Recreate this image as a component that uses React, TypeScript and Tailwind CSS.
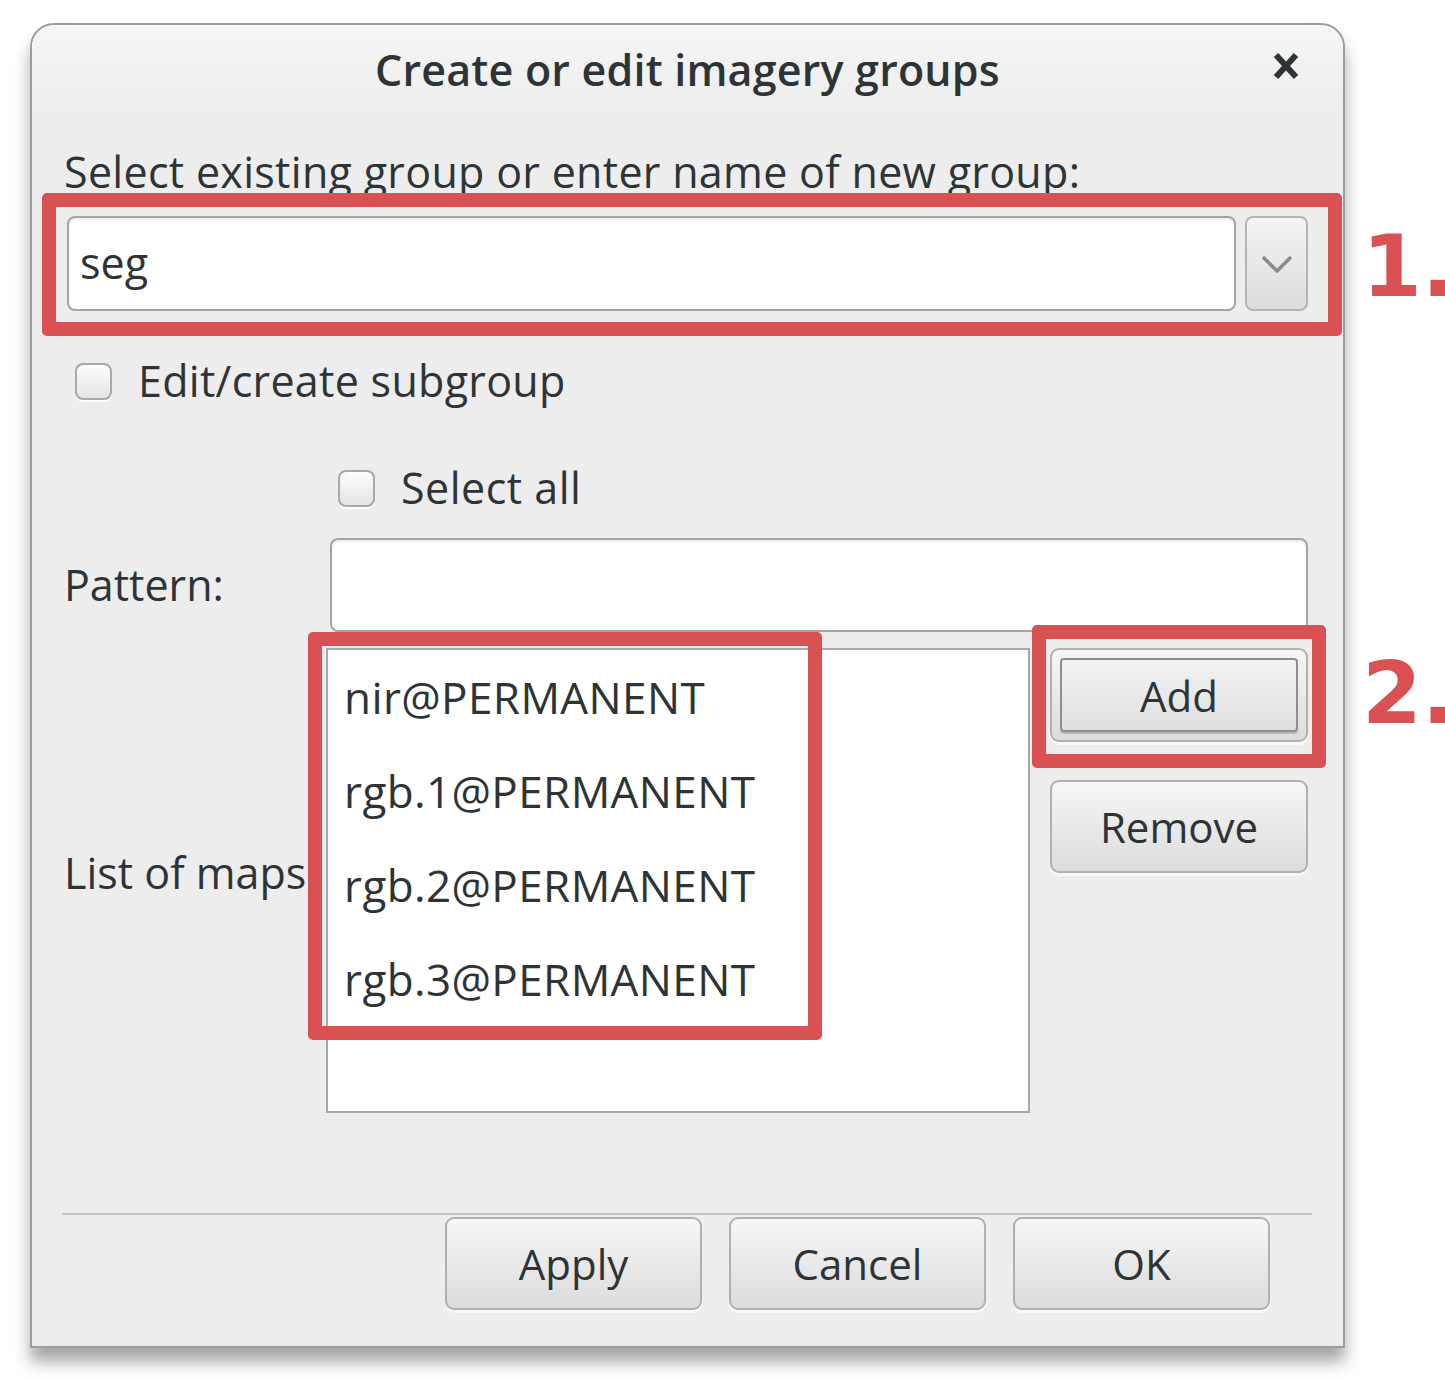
const FONT = "font-['Open_Sans','Noto_Sans',sans-serif]";

function Checkbox() {
  return (
    <div className="w-[37px] h-[37px] rounded-[8px] border-2 border-[#a8a8a8] bg-gradient-to-b from-[#fdfdfd] to-[#e4e4e4] shadow-[0_2px_0_#ffffff]" />
  );
}

function Button({ label, focused = false, className = "" }: { label: string; focused?: boolean; className?: string }) {
  return (
    <div
      className={`relative flex items-center justify-center rounded-[9px] border-2 border-[#b0b0b0] bg-gradient-to-b from-[#f6f6f6] to-[#dcdcdc] shadow-[0_3px_0_#f8f8f8] text-[42px] text-[#2e3436] ${className}`}
    >
      {focused && (
        <div className="absolute inset-[8px] rounded-[4px] border-2 border-[#8e8e8e] shadow-[0_2px_0_#b8b8b8]" />
      )}
      <span className="relative">{label}</span>
    </div>
  );
}

const MAPS = ["nir@PERMANENT", "rgb.1@PERMANENT", "rgb.2@PERMANENT", "rgb.3@PERMANENT"];

export default function App() {
  return (
    <div className={`relative w-[1445px] h-[1378px] bg-white overflow-hidden ${FONT}`}>
      <div className="pt-[23px] pl-[30px]">
        {/* Dialog */}
        <div className="w-[1315px] h-[1325px] rounded-t-[24px] border-2 border-[#9c9c9c] bg-[#ededed] shadow-[0_14px_16px_rgba(0,0,0,0.35)] flex flex-col">
          {/* Header */}
          <div className="relative h-[90px] rounded-t-[22px] bg-gradient-to-b from-[#f5f5f5] to-[#ededed] flex items-center justify-center">
            <span className="text-[43px] font-semibold text-[#2e3436] tracking-[0.2px]">Create or edit imagery groups</span>
            <svg className="absolute right-[44px] top-[27px]" width="26" height="28" viewBox="0 0 26 28">
              <path d="M3 3 L23 25 M23 3 L3 25" stroke="#2e3436" strokeWidth="6" strokeLinecap="butt" />
            </svg>
          </div>

          <div className="flex flex-col pl-[32px] pr-[35px] text-[#2e3436]">
            <div className="mt-[27px] h-[60px] flex items-center text-[43px] tracking-[0.3px]">
              Select existing group or enter name of new group:
            </div>

            {/* Combo */}
            <div className="mt-[14px] flex gap-[9px] pl-[3px]">
              <div className="flex-1 h-[95px] rounded-[8px] border-2 border-[#a4a4a4] bg-white shadow-[inset_0_2px_2px_rgba(0,0,0,0.08)] flex items-center pl-[11px] text-[43px]">
                seg
              </div>
              <div className="w-[63px] h-[95px] rounded-[8px] border-2 border-[#b4b4b4] bg-gradient-to-b from-[#f4f4f4] to-[#dcdcdc] flex items-center justify-center">
                <svg width="32" height="18" viewBox="0 0 32 18">
                  <path d="M2 2 L16 16 L30 2" fill="none" stroke="#8a8a8a" strokeWidth="3.5" />
                </svg>
              </div>
            </div>

            {/* Subgroup checkbox */}
            <div className="mt-[39px] h-[62px] flex items-center pl-[11px] gap-[26px] text-[43px] tracking-[0.3px]">
              <Checkbox />
              <span>Edit/create subgroup</span>
            </div>

            {/* Grid area */}
            <div className="grid grid-cols-[262px_1fr]">
              <div />
              <div className="mt-[45px] h-[62px] flex items-center pl-[12px] gap-[26px] text-[43px] tracking-[0.5px]">
                <Checkbox />
                <span>Select all</span>
              </div>

              <div className="mt-[19px] flex items-center text-[43px]">Pattern:</div>
              <div className="mt-[19px] ml-[4px] h-[94px] rounded-[8px] border-2 border-[#a4a4a4] bg-white shadow-[inset_0_2px_2px_rgba(0,0,0,0.08)]" />

              <div className="mt-[16px] pb-[14px] flex items-center text-[43px] whitespace-nowrap">List of maps:</div>
              <div className="mt-[16px] flex gap-[20px]">
                <div className="w-[704px] h-[465px] border-2 border-[#a8a8a8] bg-white pl-[16px] pt-0 flex flex-col">
                  {MAPS.map((m) => (
                    <div key={m} className="h-[94px] flex items-center text-[44px] tracking-[0.4px]">
                      {m}
                    </div>
                  ))}
                </div>
                <div className="flex flex-col gap-[38px]">
                  <Button label="Add" focused className="w-[258px] h-[94px]" />
                  <Button label="Remove" className="w-[258px] h-[93px]" />
                </div>
              </div>
            </div>

            {/* Separator */}
            <div className="mt-[100px] -ml-[2px] -mr-[4px] h-[2px] bg-[#c4c4c4]" />

            {/* Action buttons */}
            <div className="mt-[2px] flex justify-end gap-[27px] pr-[38px]">
              <Button label="Apply" className="w-[257px] h-[93px]" />
              <Button label="Cancel" className="w-[257px] h-[93px]" />
              <Button label="OK" className="w-[257px] h-[93px]" />
            </div>
          </div>
        </div>
      </div>

      {/* Annotation overlays */}
      <div className="absolute left-[42px] top-[193px] w-[1300px] h-[143px] border-[14px] border-[#d95153] rounded-[5px]" />
      <div className="absolute left-[308px] top-[632px] w-[514px] h-[408px] border-[14px] border-[#d95153] rounded-[5px]" />
      <div className="absolute left-[1032px] top-[625px] w-[294px] h-[143px] border-[14px] border-[#d95153] rounded-[5px]" />
      <div className="absolute left-[1362px] top-[223px] text-[86px] leading-none font-bold text-[#d95153] font-['DejaVu_Sans',sans-serif]">
        1.
      </div>
      <div className="absolute left-[1362px] top-[650px] text-[86px] leading-none font-bold text-[#d95153] font-['DejaVu_Sans',sans-serif]">
        2.
      </div>
    </div>
  );
}
